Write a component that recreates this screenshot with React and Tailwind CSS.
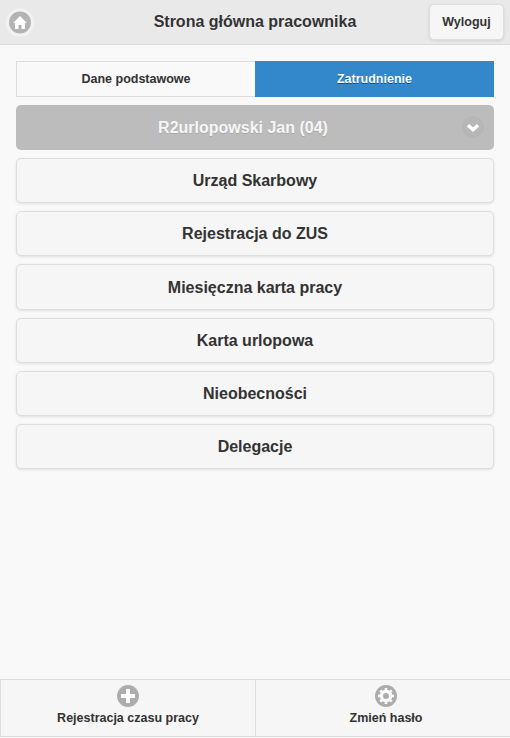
const menuItems = [
  "Urząd Skarbowy",
  "Rejestracja do ZUS",
  "Miesięczna karta pracy",
  "Karta urlopowa",
  "Nieobecności",
  "Delegacje",
];

function HomeIcon() {
  return (
    <svg width="28" height="29" viewBox="0 0 28 29">
      <circle cx="14" cy="14.5" r="14" fill="#f2f2f2" />
      <circle cx="14" cy="14.5" r="11" fill="#b3b3b3" />
      <path d="M14 8 L21 15 L19 15 L19 21 L15.5 21 L15.5 17 L12.5 17 L12.5 21 L9 21 L9 15 L7 15 Z" fill="#fff" />
    </svg>
  );
}

function ChevronIcon() {
  return (
    <svg width="22" height="22" viewBox="0 0 22 22">
      <circle cx="11" cy="11" r="11" fill="#000" fillOpacity="0.03" />
      <path d="M6 9.2 L11 13.7 L16 9.2" fill="none" stroke="#fff" strokeWidth="3.5" />
    </svg>
  );
}

function PlusIcon() {
  return (
    <svg width="22" height="22" viewBox="0 0 22 22">
      <circle cx="11" cy="11" r="11" fill="#acacac" />
      <path d="M9 4h4v5h5v4h-5v5H9v-5H4V9h5z" fill="#fff" />
    </svg>
  );
}

function GearIcon() {
  return (
    <svg width="22" height="22" viewBox="0 0 22 22">
      <circle cx="11" cy="11" r="11" fill="#acacac" />
      <circle cx="11" cy="11" r="4.6" fill="none" stroke="#fff" strokeWidth="3.2" />
      <path
        d="M11 3v3M11 16v3M3 11h3M16 11h3M5.3 5.3l2.2 2.2M14.5 14.5l2.2 2.2M5.3 16.7l2.2-2.2M14.5 7.5l2.2-2.2"
        stroke="#fff"
        strokeWidth="2.6"
      />
    </svg>
  );
}

function FooterButton({ icon, label, className }) {
  return (
    <button className={`flex flex-col items-center border border-[#ddd] bg-[#f6f6f6] pt-[5px] text-[12.5px] font-bold text-[#333] [text-shadow:0_1px_0_#f3f3f3] ${className}`}>
      {icon}
      <span className="mt-[3px] leading-[16px]">{label}</span>
    </button>
  );
}

export default function App() {
  return (
    <div className="flex h-[738px] flex-col bg-[#f9f9f9] font-['Liberation_Sans',Arial,sans-serif] text-[#333]">
      <header className="grid h-[45px] grid-cols-[1fr_auto_1fr] items-center border-b border-[#ddd] bg-[#e9e9e9]">
        <div className="pl-[6px] pt-px">
          <HomeIcon />
        </div>
        <h1 className="text-center text-[16px] font-bold [text-shadow:0_1px_0_#f3f3f3]">
          Strona główna pracownika
        </h1>
        <div className="flex justify-end pr-[6px]">
          <button className="h-[36px] w-[75px] rounded-[5px] border border-[#ddd] bg-[#f6f6f6] text-[12.5px] font-bold shadow-[0_1px_3px_rgba(0,0,0,0.1)] [text-shadow:0_1px_0_#f3f3f3]">
            Wyloguj
          </button>
        </div>
      </header>

      <main className="flex-1 px-[16px] pt-[16px]">
        <div className="grid h-[36px] grid-cols-2 text-[12.5px] font-bold">
          <button className="border border-r-0 border-[#ddd] bg-[#f9f9f9] [text-shadow:0_1px_0_#f3f3f3]">
            Dane podstawowe
          </button>
          <button className="bg-[#3388cc] text-white [text-shadow:0_1px_0_#005599]">
            Zatrudnienie
          </button>
        </div>

        <div className="relative mt-[8px] flex h-[45px] items-center justify-center rounded-[5px] bg-[#bcbcbc] pr-[24px] text-[16px] font-bold text-[#f6f6f6] [text-shadow:0_1px_0_#a8a8a8]">
          R2urlopowski Jan (04)
          <span className="absolute right-[10px] top-[11px] flex">
            <ChevronIcon />
          </span>
        </div>

        <div className="mt-[8px] flex flex-col gap-[8px]">
          {menuItems.map((item) => (
            <button
              key={item}
              className="rounded-[5px] border border-[#ddd] bg-[#f6f6f6] pb-[10.2px] pt-[12.2px] text-[16px] font-bold leading-[1.3] shadow-[0_1px_3px_rgba(0,0,0,0.1)] [text-shadow:0_1px_0_#f3f3f3]"
            >
              {item}
            </button>
          ))}
        </div>
      </main>

      <footer className="mb-px grid h-[58px] grid-cols-2">
        <FooterButton icon={<PlusIcon />} label="Rejestracja czasu pracy" className="border-r-0" />
        <FooterButton icon={<GearIcon />} label="Zmień hasło" className="border-r-0 pl-[6px]" />
      </footer>
    </div>
  );
}
